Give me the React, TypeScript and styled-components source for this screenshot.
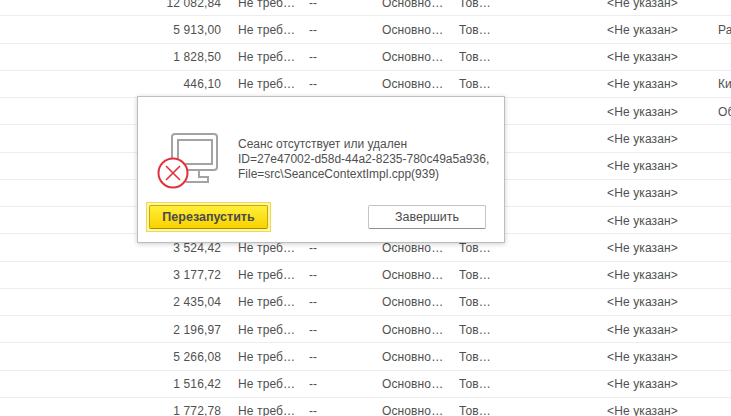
import styled, { createGlobalStyle } from "styled-components";

const GlobalStyle = createGlobalStyle`
  html, body {
    margin: 0;
    padding: 0;
    background: #fff;
    overflow: hidden;
    font-family: "Liberation Sans", Arial, sans-serif;
  }
`;

const Page = styled.div`
  position: relative;
  width: 731px;
  height: 416px;
  overflow: hidden;
`;

const Table = styled.div`
  margin-top: -11px;
`;

const Row = styled.div`
  display: grid;
  grid-template-columns: 221px 17px 57px 14px 73px 62px 15px 36px 112px 111px 13px;
  align-items: center;
  height: 27.25px;
  padding-top: 1px;
  box-sizing: border-box;
  border-bottom: 1px solid #ededed;
  font-size: 12px;
  letter-spacing: 0.12px;
  color: #505050;
`;

const Cell = styled.div<{ $right?: boolean }>`
  white-space: nowrap;
  text-align: ${props => (props.$right ? "right" : "left")};
`;

const Gap = styled.div``;

const Dialog = styled.div`
  position: absolute;
  left: 137px;
  top: 96px;
  width: 368px;
  height: 147px;
  box-sizing: border-box;
  background: #fff;
  border: 1px solid #bdbdbd;
  box-shadow: 0 1px 5px rgba(0, 0, 0, 0.2);
  display: flex;
  flex-direction: column;
  padding: 39px 18px 0 8px;
`;

const Body = styled.div`
  display: flex;
  height: 66px;
`;

const IconSlot = styled.div`
  width: 92px;
  flex: none;
  padding-left: 10px;
  box-sizing: border-box;
`;

const Icon = styled.svg`
  display: block;
  margin-top: -6px;
`;

const Message = styled.div`
  padding-top: 1px;
  font-size: 12px;
  line-height: 15px;
  color: #505050;
  white-space: nowrap;
`;

const Actions = styled.div`
  display: flex;
  justify-content: space-between;
  align-items: center;
`;

const Highlight = styled.div`
  padding: 2px;
  background: #fdf6a8;
  border: 1px solid #f2d94a;
`;

const Button = styled.button<{ $primary?: boolean }>`
  display: block;
  height: 24px;
  padding: 0;
  width: ${props => (props.$primary ? "119px" : "118px")};
  box-sizing: border-box;
  font-family: inherit;
  font-size: 12.5px;
  font-weight: ${props => (props.$primary ? 700 : 400)};
  color: #4b4b4b;
  border-radius: 2px;
  border: 1px solid ${props => (props.$primary ? "#c9a800" : "#c4c4c4")};
  border-bottom-color: ${props => (props.$primary ? "#a88c00" : "#8f8f8f")};
  background: ${props =>
    props.$primary ? "linear-gradient(#ffef3a, #f8d200)" : "#fff"};
`;

const amounts = [
  "12 082,84", "5 913,00", "1 828,50", "446,10", "", "", "", "", "", "3 524,42",
  "3 177,72", "2 435,04", "2 196,97", "5 266,08", "1 516,42", "1 772,78",
];

const lastColumn: Record<number, string> = { 1: "Ра", 3: "Ки", 4: "Об" };

// rows 4-8 are hidden behind the dialog
const isCovered = (i: number) => i >= 4 && i <= 8;

function SessionIcon() {
  return (
    <Icon width="66" height="60" viewBox="0 0 66 60">
      <g fill="none" stroke="#a3a3a3" strokeWidth="2">
        <path d="M19 4h39a3 3 0 0 1 3 3v30a3 3 0 0 1-3 3H19a3 3 0 0 1-3-3V7a3 3 0 0 1 3-3z" />
        <path d="M22 10h34v24H22z" />
        <path d="M43 40v7h9v5H30" />
      </g>
      <circle cx="17" cy="43" r="14.5" fill="#fff" stroke="#e2303c" strokeWidth="2" />
      <path d="M10 36l14 14M24 36L10 50" stroke="#e2303c" strokeWidth="1.6" fill="none" />
    </Icon>
  );
}

export default function App() {
  return (
    <Page>
      <GlobalStyle />
      <Table>
        {amounts.map((amount, i) => (
          <Row key={i}>
            <Cell $right>{amount}</Cell>
            <Gap />
            <Cell>{!isCovered(i) && "Не треб…"}</Cell>
            <Gap />
            <Cell>{!isCovered(i) && "--"}</Cell>
            <Cell>{!isCovered(i) && "Основно…"}</Cell>
            <Gap />
            <Cell>{!isCovered(i) && "Тов…"}</Cell>
            <Gap />
            <Cell>&lt;Не указан&gt;</Cell>
            <Cell>{lastColumn[i]}</Cell>
          </Row>
        ))}
      </Table>
      <Dialog>
        <Body>
          <IconSlot>
            <SessionIcon />
          </IconSlot>
          <Message>
            Сеанс отсутствует или удален
            <br />
            ID=27e47002-d58d-44a2-8235-780c49a5a936,
            <br />
            File=src\SeanceContextImpl.cpp(939)
          </Message>
        </Body>
        <Actions>
          <Highlight>
            <Button $primary>Перезапустить</Button>
          </Highlight>
          <Button>Завершить</Button>
        </Actions>
      </Dialog>
    </Page>
  );
}
